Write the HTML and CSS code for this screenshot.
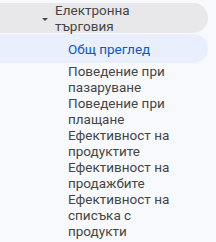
FILE: index.html
```html
<!DOCTYPE html>
<html lang="bg">
<head>
<meta charset="utf-8">
<link rel="stylesheet" href="styles.css">
</head>
<body>
<nav class="nav">
  <div class="group-row">
    <span class="caret"></span>
    <span class="group-label">Електронна търговия</span>
  </div>
  <div class="item item-active">Общ преглед</div>
  <ul class="items">
    <li class="item">Поведение при пазаруване</li>
    <li class="item">Поведение при плащане</li>
    <li class="item">Ефективност на продуктите</li>
    <li class="item">Ефективност на продажбите</li>
    <li class="item">Ефективност на списъка с продукти</li>
  </ul>
</nav>
</body>
</html>
```
FILE: styles.css
```css
html, body {
  margin: 0;
  padding: 0;
  background: #f8f9fc;
}
body {
  font-family: Roboto, "Noto Sans", sans-serif;
  font-size: 13.5px;
  line-height: 16px;
  color: #444746;
}
.nav {
  width: 208px;
  padding-top: 3px;
}
.group-row {
  display: flex;
  align-items: center;
  height: 30px;
  background: #e8e8ea;
  border-radius: 0 15px 15px 0;
  padding-left: 42px;
  box-sizing: border-box;
}
.caret {
  width: 0;
  height: 0;
  border-left: 3px solid transparent;
  border-right: 3px solid transparent;
  border-top: 3px solid #444746;
  margin-right: 7px;
  margin-top: 2px;
}
.group-label {
  width: 110px;
}
.item {
  padding-left: 68px;
  width: 108px;
}
.item-active {
  margin-top: 1px;
  height: 29px;
  box-sizing: border-box;
  width: 208px;
  padding-top: 7px;
  background: #e9effd;
  border-radius: 0 15px 15px 0;
  color: #0b57d0;
}
.items {
  list-style: none;
  margin: 0;
  padding: 0;
}
```
